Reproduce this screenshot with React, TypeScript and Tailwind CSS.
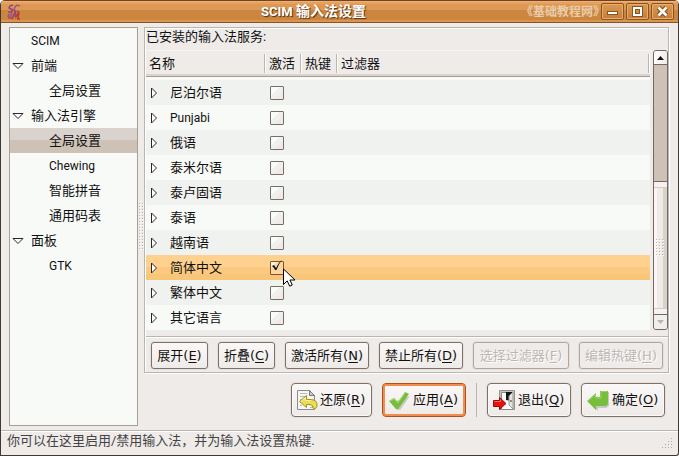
import { useState } from "react";
import type { ReactNode } from "react";
import clsx from "clsx";

interface TreeItem {
    label: string;
    level: number;
    expandable?: boolean;
}

interface Language {
    name: string;
    active?: boolean;
}

const TREE: TreeItem[] = [
    { label: "SCIM", level: 0 },
    { label: "前端", level: 0, expandable: true },
    { label: "全局设置", level: 1 },
    { label: "输入法引擎", level: 0, expandable: true },
    { label: "全局设置", level: 1 },
    { label: "Chewing", level: 1 },
    { label: "智能拼音", level: 1 },
    { label: "通用码表", level: 1 },
    { label: "面板", level: 0, expandable: true },
    { label: "GTK", level: 1 },
];

const LANGUAGES: Language[] = [
    { name: "尼泊尔语" },
    { name: "Punjabi" },
    { name: "俄语" },
    { name: "泰米尔语" },
    { name: "泰卢固语" },
    { name: "泰语" },
    { name: "越南语" },
    { name: "简体中文", active: true },
    { name: "繁体中文" },
    { name: "其它语言" },
];

const LIST_ACTIONS = [
    { label: "展开", accel: "E", width: "w-[57px]" },
    { label: "折叠", accel: "C", width: "w-[57px]" },
    { label: "激活所有", accel: "N", width: "w-[84px]" },
    { label: "禁止所有", accel: "D", width: "w-[84px]" },
    { label: "选择过滤器", accel: "F", width: "w-[96px]", disabled: true },
    { label: "编辑热键", accel: "H", width: "w-[84px]", disabled: true },
];

const isLatin = (text: string) => /^[A-Za-z]+$/.test(text);

function DotGrip({ id, width, height, className }: { id: string; width: number; height: number; className?: string }) {
    return (
        <svg width={width} height={height} className={className} aria-hidden="true" shapeRendering="crispEdges">
            <defs>
                <pattern id={id} width="3" height="3" patternUnits="userSpaceOnUse">
                    <rect width="1" height="1" fill="#bdb6b1" />
                    <rect x="1" y="1" width="1" height="1" fill="#ffffff" />
                </pattern>
            </defs>
            <rect width={width} height={height} fill={`url(#${id})`} />
        </svg>
    );
}

function TitleBar() {
    const control =
        "flex h-[17px] w-[23px] items-center justify-center rounded-[2px] border border-[#885420] bg-gradient-to-b from-[#dc9852] to-[#c67e37] shadow-[inset_0_0_0_1px_#e7ad70]";
    return (
        <header className="relative flex h-[23px] items-center justify-end border-y border-t-[#6d4425] border-b-[#86552b] bg-[linear-gradient(#f0b072_0_1px,#e7a15d_1px_3px,#dc9854_3px_9px,#cc863f_9px_19px,#d9944d_19px)] pr-1">
            {/* Application logo */}
            <svg width="14" height="16" viewBox="0 0 14 16" className="absolute left-[6px] top-[3px]" fill="none" strokeWidth="1.5" aria-hidden="true">
                <path d="M6 1 3 2 2 4 6 6 4 8 1 8" stroke="#8a4590" />
                <path d="M13 2 10 1 8 3 7 6 9 8 12 7" stroke="#a8527b" />
                <path d="M5 8 3 14M1 14h4" stroke="#a94d69" />
                <path d="M5 15 8 8 9 13 12 8 11 15M10 15h3" stroke="#b33c3c" />
                <path d="M2 10 1 13M8 9v4" stroke="#7956a6" />
            </svg>
            <h1 className="pointer-events-none absolute inset-x-0 top-0 pr-13 text-center text-[14px] font-bold leading-[21px] text-white [text-shadow:1px_1px_1px_#4a2d10]">
                <span className="text-[13px]">SCIM</span> 输入法设置
            </h1>
            <span className="-mr-1 text-[12px] font-bold text-[#e9cdab]">《基础教程网》</span>
            <div className="relative flex gap-[2px]">
                <button type="button" aria-label="最小化" className={control}>
                    <svg width="11" height="11" shapeRendering="crispEdges" aria-hidden="true">
                        <rect y="5" width="11" height="4" fill="#885420" />
                        <rect x="1" y="6" width="9" height="2" fill="#fff" />
                    </svg>
                </button>
                <button type="button" aria-label="最大化" className={control}>
                    <svg width="11" height="11" shapeRendering="crispEdges" fill="none" aria-hidden="true">
                        <path d="M.5.5h10v10H.5zM3.5 3.5h4v4h-4z" stroke="#885420" />
                        <path d="M2 2h7v7H2z" stroke="#fff" strokeWidth="2" />
                        <path d="M3.5 3.5h4v4h-4z" stroke="#885420" />
                    </svg>
                </button>
                <button type="button" aria-label="关闭" className={control}>
                    <svg width="11" height="11" fill="none" aria-hidden="true">
                        <path d="m1.5 1.5 8 8m0-8-8 8" stroke="#885420" strokeWidth="5" />
                        <path d="m1.5 1.5 8 8m0-8-8 8" stroke="#fff" strokeWidth="2.5" />
                    </svg>
                </button>
            </div>
        </header>
    );
}

function Sidebar() {
    const [selected, setSelected] = useState(4);

    return (
        <nav className="w-[129px] shrink-0 border border-[#a99d94] bg-[#f8faf7]">
            <ul>
                {TREE.map((item, index) => (
                    <li key={index}>
                        <button
                            type="button"
                            onClick={() => setSelected(index)}
                            className={clsx(
                                "flex h-[25px] w-full items-center text-left",
                                selected === index && "bg-[linear-gradient(#dad2cd_50%,#cec1b5_50%)]",
                                item.level === 0 ? "pl-[2px]" : "pl-5"
                            )}
                        >
                            <svg width="12" height="8" className="mr-[7px] shrink-0" aria-hidden="true">
                                {item.expandable && (
                                    <path d="M1 1.5h10L6 6.5z" fill="#fff" stroke="#2b2725" />
                                )}
                            </svg>
                            <span className={isLatin(item.label) ? "text-[12px]" : ""}>{item.label}</span>
                        </button>
                    </li>
                ))}
            </ul>
        </nav>
    );
}

function LanguageTable() {
    const [selected, setSelected] = useState(7);
    const [active, setActive] = useState(LANGUAGES.map((language) => Boolean(language.active)));

    const toggle = (index: number) => {
        setActive(active.map((value, i) => (i === index ? !value : value)));
    };

    const heading = "relative h-[27px] p-0 pl-[3px] text-left font-normal after:absolute after:right-0 after:top-1 after:h-[19px] after:w-[2px] after:border-l after:border-[#bab5b1] after:bg-white";

    return (
        <table className="w-full table-fixed border-collapse bg-[#f8faf7]">
            <thead className="bg-[linear-gradient(#f8f6f5_0_1px,#efebe9_1px_24px,#dcd3cc_24px_26px,#a99d92_26px)]">
                <tr>
                    <th className={clsx(heading, "w-[120px]")}>名称</th>
                    <th className={clsx(heading, "w-[36px]")}>激活</th>
                    <th className={clsx(heading, "w-[36px]")}>热键</th>
                    <th className={heading}>过滤器</th>
                </tr>
            </thead>
            <tbody className="before:block before:h-[3px] before:content-['']">
                {LANGUAGES.map((language, index) => (
                    <tr
                        key={language.name}
                        onClick={() => setSelected(index)}
                        className={clsx(
                            "h-[25px]",
                            selected === index
                                ? "bg-[linear-gradient(#fed18f_0_12px,#fbca80_12px_19px,#f8c679_19px)]"
                                : index % 2 === 0
                                  ? "bg-[#f0f2ef]"
                                  : "bg-[#f8faf7]"
                        )}
                    >
                        <td className="p-0">
                            <div className="flex items-center pl-1">
                                <button type="button" aria-label={`展开 ${language.name}`} className="mr-3">
                                    <svg width="8" height="12" className="block" aria-hidden="true">
                                        <path d="M1.5 1v10l5-5z" fill="#fff" stroke="#2b2725" />
                                    </svg>
                                </button>
                                <span className={isLatin(language.name) ? "text-[12px]" : ""}>{language.name}</span>
                            </div>
                        </td>
                        <td className="p-0">
                            <div className="relative ml-1 h-[14px] w-[14px]">
                                <input
                                    type="checkbox"
                                    aria-label={`激活 ${language.name}`}
                                    checked={active[index]}
                                    onChange={() => toggle(index)}
                                    className="block h-[14px] w-[14px] appearance-none rounded-[1px] border border-[#786e66] bg-[linear-gradient(135deg,#fafcfa_0_35%,#eef1ee_35%_65%,#f1e9e7_65%)] checked:border-[#855426] checked:bg-[linear-gradient(135deg,#fdf3e6_0_20%,#fdd5a1_30%)]"
                                />
                                {active[index] && (
                                    <svg width="14" height="16" className="pointer-events-none absolute -top-[2px] left-0" aria-hidden="true">
                                        <path d="m2 7 2-1 2 3q3-6 6-8.500-3 4-5.500 10.500L5 11Q4 8.500 2 7z" fill="#17120e" />
                                    </svg>
                                )}
                                {language.active && (
                                    <svg width="14" height="20" className="pointer-events-none absolute left-[13px] top-[7px] z-10" aria-hidden="true">
                                        <path d="M.5 1v15.5l3.700-3.600 2.500 5.300 2.600-1.200-2.400-5H12z" fill="#fff" stroke="#000" />
                                    </svg>
                                )}
                            </div>
                        </td>
                        <td className="p-0" />
                        <td className="p-0" />
                    </tr>
                ))}
            </tbody>
        </table>
    );
}

function ScrollBar() {
    return (
        <div className="flex w-[15px] shrink-0 flex-col rounded-[3px] border border-[#736961] bg-[#cec2b6]">
            <button type="button" aria-label="向上滚动" className="flex h-[14px] items-center justify-center rounded-t-[2px] border-b border-[#736961] bg-gradient-to-r from-white to-[#efebe9]">
                <svg width="7" height="4" aria-hidden="true">
                    <path d="M0 4 3.5 0 7 4z" fill="#111" />
                </svg>
            </button>
            <div className="flex-[117]" />
            <div className="flex flex-[133] flex-col border-t border-[#736961] bg-[linear-gradient(90deg,#fbf6f5_0_3px,#f0eae8_3px_9px,#d8d2cc_9px)]">
                <div className="h-[6px] border-b border-[#d5cec8] bg-[#f7f2f0]" />
                <div className="flex flex-1 items-center justify-center">
                    <DotGrip id="thumb-dots" width={9} height={18} />
                </div>
                <div className="h-[6px] border-t border-[#d5cec8] bg-[#f7f2f0]" />
            </div>
            <button type="button" aria-label="向下滚动" disabled className="flex h-[15px] items-center justify-center rounded-b-[2px] border-t border-[#736961] bg-[#efefed]">
                <svg width="7" height="4" aria-hidden="true">
                    <path d="M0 0h7L3.5 4z" fill="#b9b4af" />
                </svg>
            </button>
        </div>
    );
}

function Accel({ label, accel }: { label: string; accel: string }) {
    return (
        <span className="whitespace-nowrap font-['DejaVu_Sans','Noto_Sans_CJK_SC',sans-serif]">
            {label}(<span className="underline underline-offset-2">{accel}</span>)
        </span>
    );
}

interface DialogButtonProps {
    label: string;
    accel: string;
    icon: ReactNode;
    width?: string;
    focused?: boolean;
}

function DialogButton({ label, accel, icon, width = "w-[84px]", focused }: DialogButtonProps) {
    return (
        <button
            type="button"
            className={clsx(
                "flex h-[34px] items-center gap-[2px] rounded-[4px] border bg-gradient-to-b from-[#faf8f7] to-[#eeeae8] pl-1",
                width,
                focused
                    ? "border-[#a9521d] shadow-[inset_0_0_0_2px_#f38d4c]"
                    : "border-[#7c7068] shadow-[inset_0_0_0_1px_#fbf9f8,0_0_0_1px_#e6e0dc]"
            )}
        >
            {icon}
            <Accel label={label} accel={accel} />
        </button>
    );
}

const revertIcon = (
    <svg width="22" height="22" className="shrink-0" aria-hidden="true">
        <path d="M1.5 1.5h12l5 5v14h-17z" fill="#f5f5f4" stroke="#8b8d8c" />
        <path d="M13.5 1.5v5h5z" fill="#c9cbca" stroke="#777a79" />
        <path d="M4 4.5h7M4 7.5h6M4 10.5h2M4 16.5h2M14 18.5h3" stroke="#b9bbba" />
        <path d="M10.5 6.500v4h5q4.500 0 5.500 4 .5 3.500-1.500 5-1.500 1-2.500-.5.5-3-3-3.500h-3.500v3l-7-6z" fill="#eddc55" stroke="#a3941c" />
        <path d="m5 12.5 4.500-4v3h5" fill="none" stroke="#faf3a0" />
    </svg>
);

const applyIcon = (
    <svg width="24" height="22" className="shrink-0" aria-hidden="true">
        <path d="m4 14 6 7h3L23 7z" fill="#c9c6c3" />
        <path d="m2 12 5-3 4 4 7-10 4 2-11 15H9z" fill="#75bd3d" />
        <path d="m3 12 4-2 4 4 7-10" fill="none" stroke="#9cda62" />
    </svg>
);

const quitIcon = (
    <svg width="24" height="22" className="shrink-0" aria-hidden="true">
        <path d="M7.5 1.5h15v19h-15z" fill="#c6c6c2" stroke="#92928e" />
        <path d="M9.5 3.5h11v17h-11z" fill="#fff" stroke="#888985" />
        <path d="M14 3h6v9l-6-1z" fill="#151514" />
        <path d="m17 7 4-4v17l-4-4z" fill="#e4e4e1" stroke="#9b9b97" />
        <path d="M19 11v2" stroke="#333" />
        <path d="M1.5 11.5h6v-3l6.500 6-6.500 6v-3h-6z" fill="#e91010" stroke="#9f0909" />
        <path d="M2.5 12.5h6v-2" fill="none" stroke="#ff6b5d" />
    </svg>
);

const okIcon = (
    <svg width="24" height="22" className="shrink-0" aria-hidden="true">
        <path d="m3 13 9-6v4h5V3h6v14l-3 2h-8v3z" fill="#c9c6c3" />
        <path d="m1 12 9-8v4h4V2h8v12q0 3-3 3h-9v4z" fill="#76be3b" />
        <path d="M2 12 9.500 5.500V9H15V2.500h6" fill="none" stroke="#98d65f" />
    </svg>
);

export default function App() {
    return (
        <div className="min-h-screen bg-white">
            <main className="flex min-h-screen flex-col overflow-hidden rounded-t-[5px] rounded-br-[3px] border-b border-l border-r border-[#403832] bg-[#efebe9] font-[Roboto,'Noto_Sans_CJK_SC',sans-serif] text-[13px] leading-4 text-[#111]">
                <TitleBar />

                <div className="flex flex-1 pb-1 pl-2 pr-[9px] pt-1">
                    <Sidebar />
                    <div className="flex w-[6px] shrink-0 items-center justify-center">
                        <DotGrip id="pane-dots" width={5} height={47} />
                    </div>

                    <div className="flex min-w-0 flex-1 flex-col">
                        <section className="flex-1 border border-[#bab5b1] pl-px pt-px shadow-[1px_1px_0_#fff,inset_1px_1px_0_#fff]">
                            <h2 className="h-[21px]">已安装的输入法服务:</h2>
                            <div className="flex gap-[3px]">
                                <div className="min-w-0 flex-1">
                                    <LanguageTable />
                                </div>
                                <ScrollBar />
                            </div>
                            <div className="mt-[6px] flex gap-[10px] border-t border-[#bab5b1] pb-[3px] pl-[5px] pt-[5px] shadow-[inset_0_1px_0_#fff]">
                                {LIST_ACTIONS.map((action) => (
                                    <button
                                        key={action.accel}
                                        type="button"
                                        disabled={action.disabled}
                                        className={clsx(
                                            "flex h-[27px] items-center justify-center rounded-[3px] border border-[#7c7068] bg-gradient-to-b from-[#faf8f7] to-[#eeeae8] shadow-[0_0_0_1px_#e6e0dc] disabled:border-[#b1a69d] disabled:bg-none disabled:text-[#bcb7b3] disabled:[text-shadow:1px_1px_0_#fff]",
                                            action.width
                                        )}
                                    >
                                        <Accel label={action.label} accel={action.accel} />
                                    </button>
                                ))}
                            </div>
                        </section>

                        <div className="mb-[9px] mt-[10px] flex justify-end gap-[10px] pr-1">
                            <DialogButton label="还原" accel="R" icon={revertIcon} width="w-[81px]" />
                            <DialogButton label="应用" accel="A" icon={applyIcon} focused />
                            <div className="w-px bg-[#bab5b1]" />
                            <DialogButton label="退出" accel="Q" icon={quitIcon} />
                            <DialogButton label="确定" accel="O" icon={okIcon} />
                        </div>
                    </div>
                </div>

                <footer className="flex h-[25px] items-start justify-between border-t border-[#bab5b1] pl-[6px] pr-1 pt-[2px] text-[#444] shadow-[inset_0_1px_0_#fff]">
                    <p>你可以在这里启用/禁用输入法，并为输入法设置热键.</p>
                    <svg width="12" height="12" className="mt-[5px]" fill="#b1aaa5" shapeRendering="crispEdges" aria-hidden="true">
                        <path d="M9 0h1v1H9zM9 3h1v1H9zM6 3h1v1H6zM9 6h1v1H9zM6 6h1v1H6zM3 6h1v1H3zM9 9h1v1H9zM6 9h1v1H6zM3 9h1v1H3zM0 9h1v1H0z" />
                    </svg>
                </footer>
            </main>
        </div>
    );
}
